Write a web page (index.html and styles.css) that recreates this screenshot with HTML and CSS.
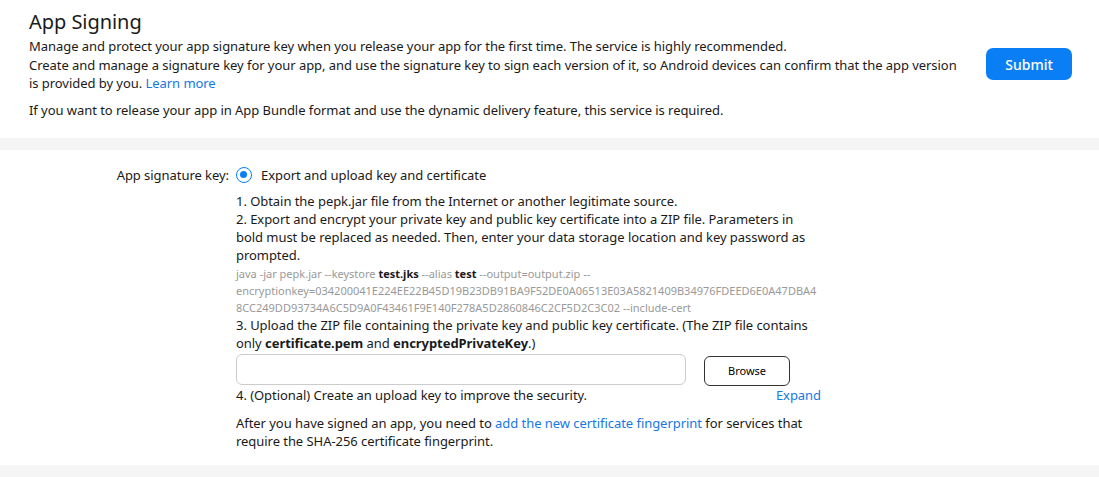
FILE: index.html
```html
<!DOCTYPE html>
<html>
<head>
    <title>App Signing</title>
    <link rel="stylesheet" href="styles.css">
</head>
<body>
    <div class="page-wrapper">
        <div class="intro">
            <div class="intro-text">
                <h2>App Signing</h2>
                <p>Manage and protect your app signature key when you release your app for the first time. The service is highly recommended.<br>
                Create and manage a signature key for your app, and use the signature key to sign each version of it, so Android devices can confirm that the app version is provided by you. <a href="#">Learn more</a></p>
                <p class="note">If you want to release your app in App Bundle format and use the dynamic delivery feature, this service is required.</p>
            </div>
            <button type="button" class="btn">Submit</button>
        </div>

        <div class="container">
            <div class="form-row">
                <label class="row-label">App signature key:</label>
                <div class="row-body">
                    <div class="radio-line">
                        <span class="radio checked"></span>
                        <span>Export and upload key and certificate</span>
                    </div>
                    <div class="steps">
                        <p>1. Obtain the pepk.jar file from the Internet or another legitimate source.</p>
                        <p>2. Export and encrypt your private key and public key certificate into a ZIP file. Parameters in bold must be replaced as needed. Then, enter your data storage location and key password as prompted.</p>
                        <p class="code">java -jar pepk.jar --keystore <b>test.jks</b> --alias <b>test</b> --output=output.zip --encryptionkey=034200041E224EE22B45D19B23DB91BA9F52DE0A06513E03A5821409B34976FDEED6E0A47DBA48CC249DD93734A6C5D9A0F43461F9E140F278A5D2860846C2CF5D2C3C02 --include-cert</p>
                        <p>3. Upload the ZIP file containing the private key and public key certificate. (The ZIP file contains only <b>certificate.pem</b> and <b>encryptedPrivateKey</b>.)</p>
                        <div class="upload">
                            <input type="text" class="file-field" />
                            <button type="button" class="btn-outline">Browse</button>
                        </div>
                        <div class="step-four">
                            <span>4. (Optional) Create an upload key to improve the security.</span>
                            <a href="#">Expand</a>
                        </div>
                        <p class="after">After you have signed an app, you need to <a href="#">add the new certificate fingerprint</a> for services that require the SHA-256 certificate fingerprint.</p>
                    </div>
                </div>
            </div>
        </div>
    </div>
</body>
</html>
```

FILE: styles.css
```css
* {
    margin: 0;
    padding: 0;
    box-sizing: border-box;
    font-family: "Noto Sans", "Open Sans", sans-serif;
}

body {
    background: #f5f5f5;
    color: #1a1a1a;
    font-size: 13px;
    letter-spacing: -0.05px;
}

a {
    color: #1677e5;
    text-decoration: none;
}

.intro {
    background: #fff;
    height: 138px;
    padding: 8px 27px 0 29px;
    display: flex;
    justify-content: space-between;
    align-items: flex-start;
}

.intro-text {
    width: 940px;
}

h2 {
    font-size: 20px;
    font-weight: 400;
    line-height: 27px;
    margin-bottom: 2px;
}

.intro p {
    line-height: 18.5px;
}

.intro .note {
    margin-top: 8px;
}

.btn {
    margin-top: 40px;
    width: 86px;
    height: 32px;
    background: #0a7ff5;
    color: #fff;
    border: none;
    border-radius: 7px;
    font-size: 14px;
    font-weight: 500;
}

.container {
    background: #fff;
    margin-top: 12px;
    height: 315px;
    padding-top: 16px;
}

.form-row {
    display: grid;
    grid-template-columns: 236px 585px;
}

.row-label {
    text-align: right;
    padding-right: 7px;
    line-height: 18.5px;
}

.radio-line {
    display: flex;
    align-items: center;
    gap: 9px;
    height: 18.5px;
}

.radio {
    width: 16px;
    height: 16px;
    border: 1.5px solid #0a7ff5;
    border-radius: 50%;
    position: relative;
}

.radio.checked::after {
    content: "";
    position: absolute;
    top: 3px;
    left: 3px;
    width: 7px;
    height: 7px;
    border-radius: 50%;
    background: #0a7ff5;
}

.steps {
    margin-top: 7px;
}

.steps p {
    line-height: 18px;
}

.steps .code {
    color: #999;
    font-size: 11px;
    line-height: 17px;
    letter-spacing: 0;
    overflow-wrap: anywhere;
    margin-top: 1px;
}

.steps .code b {
    color: #1a1a1a;
}

.upload {
    display: flex;
    align-items: center;
    margin-top: 2px;
    gap: 18px;
}

.file-field {
    width: 450px;
    height: 31px;
    border: 1px solid #ccc;
    border-radius: 6px;
}

.btn-outline {
    width: 86px;
    height: 30px;
    background: #fff;
    border: 1px solid #333;
    border-radius: 6px;
    font-size: 11px;
    margin-top: 2px;
}

.step-four {
    display: flex;
    justify-content: space-between;
    line-height: 18.5px;
}

.steps .after {
    margin-top: 10px;
}
```
